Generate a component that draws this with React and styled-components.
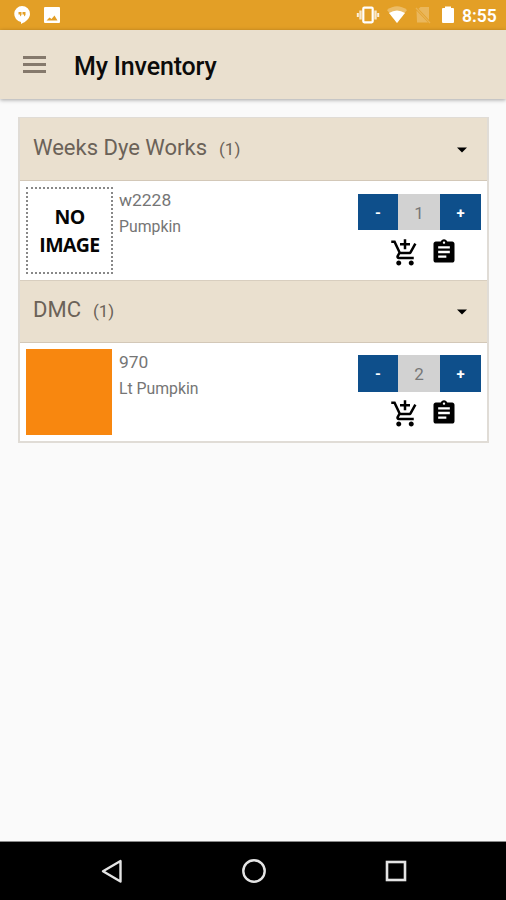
import styled, { createGlobalStyle } from "styled-components";
import { MdAddShoppingCart, MdAssignment } from "react-icons/md";

const GlobalStyle = createGlobalStyle`
  * {
    box-sizing: border-box;
  }

  body {
    margin: 0;
    background: #fafafa;
    font-family: Roboto, "Liberation Sans", sans-serif;
  }

  button {
    border: 0;
    padding: 0;
    background: transparent;
    font-family: inherit;
  }
`;

const Screen = styled.div`
  display: flex;
  flex-direction: column;
  width: 506px;
  height: 900px;
  overflow: hidden;
  background: #fafafa;
`;

const StatusBar = styled.div`
  display: flex;
  flex: none;
  justify-content: space-between;
  height: 30px;
  padding: 0 9px 0 12px;
  background: #e39f26;
  color: white;
`;

const StatusGroup = styled.div`
  display: flex;
  align-items: center;
  gap: ${(props) => props.$gap}px;
`;

const Clock = styled.span`
  width: 35px;
  padding-top: 1px;
  font-size: 17.5px;
  font-weight: 600;
  white-space: nowrap;
`;

const Header = styled.header`
  display: flex;
  flex: none;
  align-items: center;
  height: 69px;
  padding-left: 23px;
  background: #eae0cf;
  box-shadow: 0 1px 4px rgba(0, 0, 0, 0.35);
`;

const MenuButton = styled.button`
  display: flex;
  flex-direction: column;
  gap: 4px;
  width: 23px;
`;

const MenuLine = styled.span`
  height: 3px;
  background: #85796c;
`;

const Title = styled.h1`
  margin: 3px 0 0 28px;
  color: #0c0b0a;
  font-size: 25px;
  font-weight: 500;
  letter-spacing: -0.15px;
`;

const Content = styled.main`
  flex: 1;
  padding: 18px 17px 0 18px;
`;

const Inventory = styled.div`
  border: 2px solid #e0dcd6;
  border-top-width: 1px;
  background: white;
`;

const BrandHeader = styled.div`
  display: flex;
  align-items: center;
  justify-content: space-between;
  height: 63px;
  padding: 0 20px 1px 13px;
  border-bottom: 1px solid #d3c8b8;
  border-top: ${(props) => (props.$divided ? "1px solid #d8cebf" : "0")};
  background: #eae0cf;
  color: #6b6258;

  svg {
    margin-top: 2px;
  }
`;

const BrandLabel = styled.div`
  margin-top: -2px;
`;

const Brand = styled.span`
  font-size: 22px;
`;

const Count = styled.span`
  margin-left: 12px;
  font-size: 17px;
`;

const Item = styled.div`
  display: flex;
  height: 98.5px;
  padding: 6px 6px 0 6px;
`;

const Swatch = styled.div`
  flex: none;
  width: 86px;
  height: 86px;
  background: ${(props) => props.$color};
`;

const NoImage = styled.div`
  display: flex;
  flex: none;
  align-items: center;
  width: 87px;
  height: 87px;
  border: 2px dotted #888;
  justify-content: center;
  color: #050505;
  font-family: "Open Sans", sans-serif;
  font-size: 19.5px;
  font-weight: 700;
  letter-spacing: -0.6px;
  line-height: 28px;
  text-align: center;
`;

const Details = styled.div`
  flex: 1;
  margin-left: ${(props) => props.$offset}px;
  color: #757575;
`;

const Code = styled.div`
  font-size: 17.4px;
  line-height: 26px;
`;

const Name = styled.div`
  font-size: 15.8px;
  line-height: 27px;
`;

const Controls = styled.div`
  width: 123px;
  padding-top: 6.5px;
`;

const Stepper = styled.div`
  display: grid;
  grid-template-columns: 40px 42px 41px;
  height: 36.5px;
`;

const StepButton = styled.button`
  padding-top: 2px;
  background: #0e4f8b;
  color: white;
  font-size: 15px;
  font-weight: 700;
`;

const Quantity = styled.span`
  display: flex;
  align-items: center;
  justify-content: center;
  padding-top: 2px;
  background: #d2d2d2;
  color: #777;
  font-size: 17px;
`;

const Actions = styled.div`
  display: flex;
  gap: 10px;
  padding: 7.5px 0 0 32px;
`;

const NavBar = styled.nav`
  display: flex;
  flex: none;
  align-items: center;
  justify-content: space-between;
  height: 59px;
  padding: 0 97px 0 99px;
  border-top: 1px solid #8a8a8a;
  background: black;
`;

const brands = [
  {
    name: "Weeks Dye Works",
    item: { code: "w2228", name: "Pumpkin", quantity: 1 },
  },
  {
    name: "DMC",
    item: { code: "970", name: "Lt Pumpkin", quantity: 2, color: "#f8870f" },
  },
];

const StatusIcons = () => (
  <StatusGroup $gap={10}>
    <svg width="20" height="20" viewBox="0 0 20 20">
      <path
        fill="currentColor"
        d="M10 1a8 8 0 0 0-1 15.900V19c5-2.200 9-5.600 9-10a8 8 0 0 0-8-8z"
      />
      <path fill="#e39f26" d="M6.500 7h3v3l-1.500 1.500V9.500H6.500zM10.500 7h3v3l-1.500 1.500V9.500h-1.500z" />
    </svg>
    <svg width="20" height="20" viewBox="0 0 20 20">
      <rect x="2" y="2" width="16" height="16" rx="1" fill="currentColor" />
      <path fill="#e39f26" d="M4.500 15.500l3-3 2 1.500 3-3.500 3 5z" />
    </svg>
  </StatusGroup>
);

const SystemIcons = () => (
  <StatusGroup $gap={7}>
    <svg width="24" height="20" viewBox="0 0 24 20">
      <rect x="7.300" y="2.700" width="9.400" height="14.600" rx="1" fill="none" stroke="currentColor" strokeWidth="2.200" />
      <path d="M4.500 5.500v9M19.500 5.500v9" stroke="currentColor" strokeOpacity="0.75" strokeWidth="2.400" />
      <path d="M1.800 8v4M22.200 8v4" stroke="currentColor" strokeOpacity="0.85" strokeWidth="2" />
    </svg>
    <svg width="20" height="20" viewBox="0 0 20 20">
      <path fill="currentColor" opacity="0.3" d="M0 5q10-7.500 20 0L10 18z" />
      <path fill="currentColor" d="M2 8q8-5 16 0L10 18z" />
    </svg>
    <svg width="18" height="20" viewBox="0 0 18 20">
      <path fill="currentColor" opacity="0.25" d="M6.500 2H15v13L4.500 3.700zM2.500 5.500L14 17.500H3z" />
      <path d="M2 3l14 15" stroke="#fff" strokeOpacity="0.2" strokeWidth="1.300" />
    </svg>
    <svg width="16" height="20" viewBox="0 0 16 20">
      <path fill="currentColor" d="M3 4q0-1 1-1h2V1.500h6V3h2q1 0 1 1v13q0 1-1 1H4q-1 0-1-1z" />
    </svg>
    <Clock>8:55</Clock>
  </StatusGroup>
);

const BrandSection = ({ brand, divided }) => {
  const { item } = brand;
  return (
    <section>
      <BrandHeader $divided={divided}>
        <BrandLabel>
          <Brand>{brand.name}</Brand>
          <Count>(1)</Count>
        </BrandLabel>
        <svg width="10" height="6" viewBox="0 0 10 6">
          <path d="M0 .5h10L5 5.500z" fill="#000" />
        </svg>
      </BrandHeader>
      <Item>
        {item.color ? (
          <Swatch $color={item.color} />
        ) : (
          <NoImage>
            NO
            <br />
            IMAGE
          </NoImage>
        )}
        <Details $offset={item.color ? 7 : 6}>
          <Code>{item.code}</Code>
          <Name>{item.name}</Name>
        </Details>
        <Controls>
          <Stepper>
            <StepButton>-</StepButton>
            <Quantity>{item.quantity}</Quantity>
            <StepButton>+</StepButton>
          </Stepper>
          <Actions>
            <MdAddShoppingCart size={30} />
            <MdAssignment size={28} />
          </Actions>
        </Controls>
      </Item>
    </section>
  );
};

const App = () => {
  return (
    <>
      <GlobalStyle />
      <Screen>
        <StatusBar>
          <StatusIcons />
          <SystemIcons />
        </StatusBar>
        <Header>
          <MenuButton aria-label="Menu">
            <MenuLine />
            <MenuLine />
            <MenuLine />
          </MenuButton>
          <Title>My Inventory</Title>
        </Header>
        <Content>
          <Inventory>
            {brands.map((brand, index) => (
              <BrandSection key={brand.name} brand={brand} divided={index > 0} />
            ))}
          </Inventory>
        </Content>
        <NavBar>
          <svg width="26" height="26" viewBox="0 0 26 26">
            <path d="M21.500 3v20.500L4 13.200z" fill="none" stroke="#e4e4e4" strokeWidth="2.400" strokeLinejoin="round" />
          </svg>
          <svg width="26" height="26" viewBox="0 0 26 26">
            <circle cx="13" cy="13" r="10.700" fill="none" stroke="#e4e4e4" strokeWidth="2.400" />
          </svg>
          <svg width="26" height="26" viewBox="0 0 26 26">
            <rect x="4" y="4" width="18" height="18" fill="none" stroke="#e4e4e4" strokeWidth="2.600" />
          </svg>
        </NavBar>
      </Screen>
    </>
  );
};

export default App;
